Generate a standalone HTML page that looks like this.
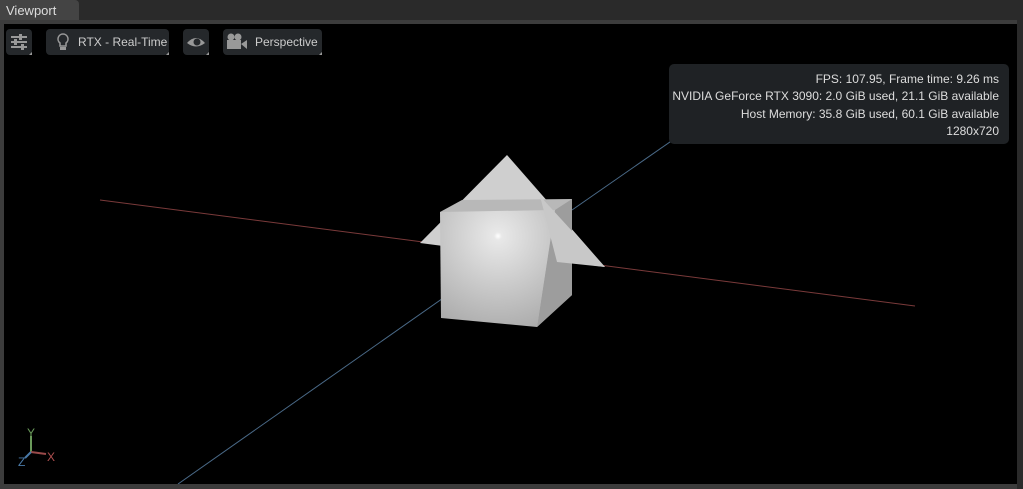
<!DOCTYPE html>
<html><head><style>
body{margin:0;width:1023px;height:489px;background:#2a2a2a;overflow:hidden;font-family:"Liberation Sans",sans-serif;position:relative}
.tab{position:absolute;left:0;top:0;width:79px;height:20px;background:#444;border-radius:0 4px 0 0;color:#ddd;font-size:13px;line-height:21px;padding-left:6px;box-sizing:border-box}
.frame{position:absolute;left:0;top:20px;width:1017px;height:469px;background:#3c3c3c}
.vp{position:absolute;left:4px;top:24px;width:1013px;height:460px;background:#000;overflow:hidden}
.btn{position:absolute;top:29px;height:26px;background:#25282b;border-radius:4px;color:#ccc;font-size:12px;line-height:27px}
.btn:after{content:"";position:absolute;right:0;bottom:0;border-left:3px solid transparent;border-bottom:3px solid #999}
.info{position:absolute;left:669px;top:64px;width:340px;height:80px;background:#1f2225;border-radius:5px;color:#ddd;font-size:12px;text-align:right;box-sizing:border-box;padding:7px 10px 0 0;line-height:17.3px}
</style></head><body>
<div class="tab">Viewport</div>
<div class="frame"></div>
<div class="vp">
<svg width="1013" height="460" style="position:absolute;left:0;top:0">
<defs>
<radialGradient id="g" cx="498" cy="236" r="100" gradientUnits="userSpaceOnUse"><stop offset="0" stop-color="#fff"/><stop offset="0.04" stop-color="#e8e8e8"/><stop offset="1" stop-color="#aaa"/></radialGradient>
</defs>
<g transform="translate(-4,-24)">
<line x1="100" y1="200" x2="915" y2="306" stroke="#7a3a3a" stroke-width="1"/>
<line x1="178" y1="484" x2="486" y2="268" stroke="#4a6a88" stroke-width="1"/>
<line x1="572" y1="210" x2="716" y2="110" stroke="#4a6a88" stroke-width="1"/>
<polygon points="507,155 420,243 605,267" fill="#cfcfcf"/>
<polygon points="440,212 462,200 572,199 572,295 537,327" fill="#b8b8b8"/>
<polygon points="555,210 572,199 572,295 537,327" fill="#9d9d9d"/>
<polygon points="440,212 555,210 537,327 441,318" fill="url(#g)"/>
<polygon points="540,196 605,267 557,262" fill="#c8c8c8"/>
<line x1="31" y1="452" x2="31" y2="436" stroke="#6a9a5a" stroke-width="2"/>
<line x1="31" y1="452" x2="46" y2="454" stroke="#9a4a4a" stroke-width="2"/>
<line x1="31" y1="452" x2="25" y2="458" stroke="#4a7aa8" stroke-width="2"/>
<text x="27" y="437" fill="#6a9a5a" font-size="12" font-family="Liberation Sans">Y</text>
<text x="47" y="461" fill="#b05050" font-size="12" font-family="Liberation Sans">X</text>
<text x="18" y="466" fill="#4a7aa8" font-size="12" font-family="Liberation Sans">Z</text>
</g>
</svg>
</div>
<div class="btn" style="left:6px;width:26px"><svg width="26" height="26"><g stroke="#999" stroke-width="2"><line x1="5" y1="8" x2="21" y2="8"/><line x1="5" y1="13" x2="21" y2="13"/><line x1="5" y1="18" x2="21" y2="18"/></g><g fill="#999"><rect x="13" y="5" width="3" height="6"/><rect x="8" y="10" width="3" height="6"/><rect x="15" y="15" width="3" height="6"/></g></svg></div>
<div class="btn" style="left:46px;width:123px"><svg width="26" height="26" style="position:absolute;left:4px;top:0"><path d="M13 5a5 5 0 0 0-3 9v3h6v-3a5 5 0 0 0-3-9z" fill="none" stroke="#999" stroke-width="1.5"/><rect x="10" y="18" width="6" height="3" fill="#999"/></svg><span style="position:absolute;left:32px">RTX - Real-Time</span></div>
<div class="btn" style="left:183px;width:26px"><svg width="26" height="26"><path d="M4 14q9-10 18 0q-9 7-18 0z" fill="#999"/><circle cx="14" cy="13" r="3.5" fill="#25282b"/></svg></div>
<div class="btn" style="left:223px;width:99px"><svg width="30" height="26" style="position:absolute;left:0;top:0"><circle cx="8" cy="8" r="3.5" fill="#999"/><circle cx="15" cy="8" r="3.5" fill="#999"/><rect x="4" y="11" width="14" height="9" fill="#999"/><path d="M18 15l6-4v9z" fill="#999"/></svg><span style="position:absolute;left:32px">Perspective</span></div>
<div class="info">FPS: 107.95, Frame time: 9.26 ms<br>NVIDIA GeForce RTX 3090: 2.0 GiB used, 21.1 GiB available<br>Host Memory: 35.8 GiB used, 60.1 GiB available<br>1280x720</div>
</body></html>
